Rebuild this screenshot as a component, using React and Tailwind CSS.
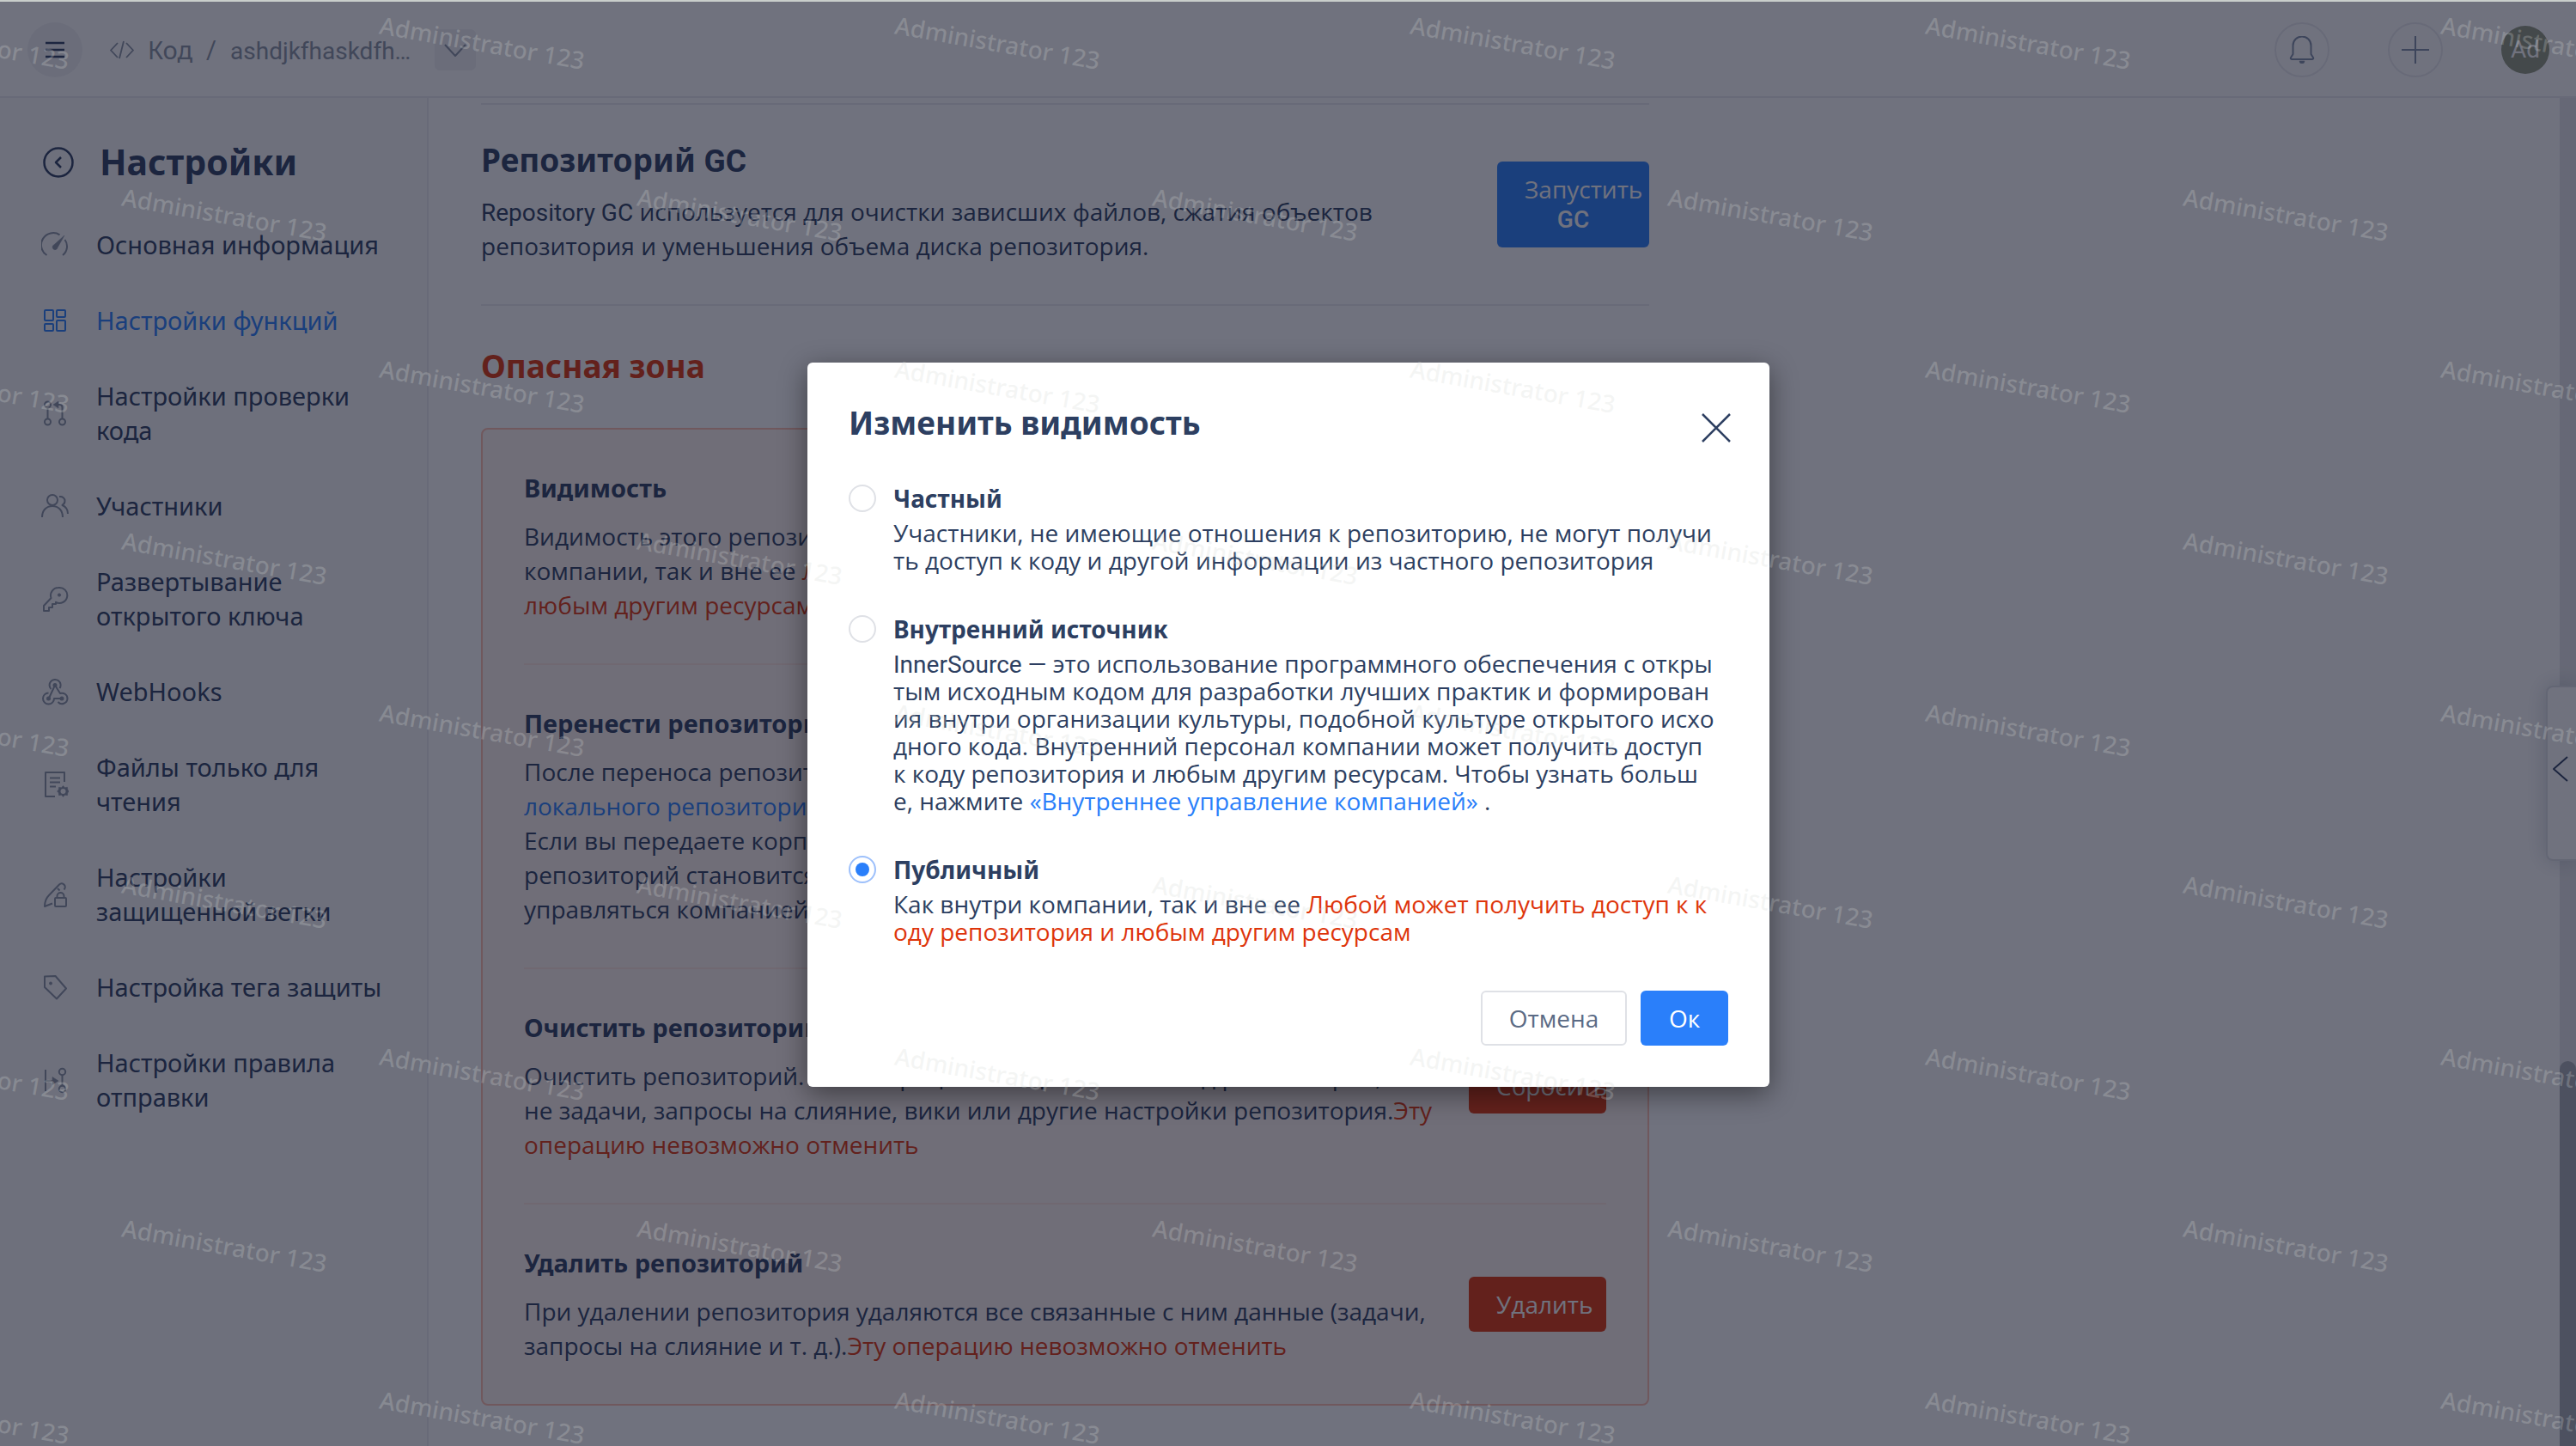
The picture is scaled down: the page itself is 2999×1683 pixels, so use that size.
const ink = "text-[#2d3f61]";
const noto = "font-['Noto_Sans','Open_Sans',sans-serif]";

function Icon({ children, size = "size-8", stroke = 2, box = "0 0 32 32" }) {
  return (
    <svg
      viewBox={box}
      className={`${size} shrink-0`}
      fill="none"
      stroke="currentColor"
      strokeWidth={stroke}
      strokeLinecap="butt"
      strokeLinejoin="round"
      aria-hidden="true"
    >
      {children}
    </svg>
  );
}

const icons = {
  gauge: (
    <Icon>
      <path d="M6.5 28A13 13 0 0 1 21.5 4.3M27.5 10A13 13 0 0 1 25 28" />
      <path d="M27 5 19 19.2a3 3 0 1 1-4-3.4Z" fill="currentColor" strokeWidth="0.5" />
    </Icon>
  ),
  grid: (
    <Icon>
      <rect x="4" y="4" width="10" height="12" rx="1" />
      <rect x="18" y="4" width="10" height="8" rx="1" />
      <rect x="4" y="20" width="10" height="8" rx="1" />
      <rect x="18" y="16" width="10" height="12" rx="1" />
    </Icon>
  ),
  review: (
    <Icon>
      <circle cx="7.5" cy="6" r="3.5" />
      <circle cx="7.5" cy="26" r="3.5" />
      <circle cx="24.5" cy="26" r="3.5" />
      <path d="M7.5 10v12M24.5 22V9a3 3 0 0 0-3-3H18" />
      <path d="M20 2v8l-6-4Z" fill="currentColor" strokeWidth="0.5" />
    </Icon>
  ),
  members: (
    <Icon>
      <circle cx="13" cy="9" r="6" />
      <path d="M1 29c0-8 5-13 12-13s12 5 12 13" />
      <path d="M21 5c4-.5 6.5 2 6.5 5 0 2-1 4-3 5 3.5 1.5 6.5 5 6.5 10" />
    </Icon>
  ),
  key: (
    <Icon>
      <path d="M20 3a9 9 0 0 0-8.5 12L3 24v6h6v-4h4v-4h4v-2.2A9 9 0 1 0 20 3Z" />
      <circle cx="21" cy="11.5" r="1.6" fill="currentColor" strokeWidth="1" />
    </Icon>
  ),
  hooks: (
    <Icon>
      <path d="M11.5 13a6.5 6.5 0 1 1 10-1M16 8.5 22 18c4-1 8.5 1 8.5 6a6.3 6.3 0 0 1-11 4" />
      <path d="m16 8.5-7 15M8.5 17.5a6.5 6.5 0 1 0 6.5 6.5h9" />
      <circle cx="16" cy="8.5" r="1.5" fill="currentColor" />
      <circle cx="8.5" cy="24" r="1.5" fill="currentColor" />
      <circle cx="24" cy="24" r="1.5" fill="currentColor" />
    </Icon>
  ),
  files: (
    <Icon>
      <path d="M16 30H5V2h22v11M10 8.5h12M10 13.5h12M10 18.5h7" />
      <path
        d="m25.5 17.5 2 2.2 3-.4.3 3 1.7 1.7-1.7 1.7-.3 3-3-.4-2 2.2-2-2.2-3 .4-.3-3-1.7-1.7 1.7-1.7.3-3 3 .4Z"
        fill="currentColor"
        strokeWidth="0.5"
      />
      <circle cx="25.5" cy="24" r="3" className="fill-[#fafafb]" stroke="none" />
    </Icon>
  ),
  branch: (
    <Icon>
      <path d="M13 26.5 4 30c0-7 2-10 5-13L21 4.5c2-2 4-1.5 5.5 0s2 4 0 6M19 9l2.5 2.5" />
      <rect x="16" y="20" width="13" height="10" rx="1" />
      <path d="M18.5 20v-2a4 4 0 0 1 8 0v2" />
    </Icon>
  ),
  tag: (
    <Icon>
      <path d="M4 3.5 16.5 3 29 17.5 18 29.5 4 16Z" />
      <circle cx="11" cy="11.5" r="1.5" fill="currentColor" strokeWidth="1" />
    </Icon>
  ),
  push: (
    <Icon>
      <path d="M5 4v25M5 17h8M24.5 10.5v12" />
      <path d="M13 12.5v9l7-4.5Z" fill="currentColor" strokeWidth="0.5" />
      <circle cx="24.5" cy="6.5" r="3.7" />
      <circle cx="24.5" cy="26.5" r="3.7" />
    </Icon>
  ),
};

const nav = [
  { icon: "gauge", lines: ["Основная информация"] },
  { icon: "grid", lines: ["Настройки функций"], active: true },
  { icon: "review", lines: ["Настройки проверки", "кода"] },
  { icon: "members", lines: ["Участники"] },
  { icon: "key", lines: ["Развертывание", "открытого ключа"] },
  { icon: "hooks", lines: ["WebHooks"] },
  { icon: "files", lines: ["Файлы только для", "чтения"] },
  { icon: "branch", lines: ["Настройки", "защищенной ветки"] },
  { icon: "tag", lines: ["Настройка тега защиты"] },
  { icon: "push", lines: ["Настройки правила", "отправки"] },
];

function Line({ children }) {
  return <span className="block whitespace-nowrap">{children}</span>;
}

function Red({ children }) {
  return <span className="text-[#de350b]">{children}</span>;
}

function Latin({ children }) {
  return <span className="font-[Roboto,sans-serif] leading-none">{children}</span>;
}

function Header() {
  return (
    <header className="flex h-28 shrink-0 items-center border-b-2 border-[#ebecf0] bg-white pt-0.5 pr-[31px] pl-8 text-[#8993a4]">
      <button aria-label="Меню" className={`flex size-16 items-center justify-center rounded-full bg-[#f2f3f6] ${ink}`}>
        <Icon size="size-6" stroke={2.4} box="0 0 24 24">
          <path d="M1 4h22M1 12h22M1 20h22" />
        </Icon>
      </button>
      <nav className="ml-7 flex items-center text-[29px] leading-10" aria-label="Путь">
        <a href="#code" className="flex items-center gap-4">
          <Icon size="size-8" stroke={1.8}>
            <path d="M13 8 5 16.5l8 8.5M23 8l8 8.5-8 8.5M20 6l-5 20" />
          </Icon>
          <span className={noto}>Код</span>
        </a>
        <span className="mx-4 font-[Roboto,sans-serif]">/</span>
        <a href="#repo" className="text-[28px]">
          <Latin>ashdjkfhaskdfh…</Latin>
        </a>
        <button aria-label="Выбрать репозиторий" className="ml-7 flex size-12 items-center justify-center rounded-md bg-[#f2f3f6]">
          <Icon stroke={2}>
            <path d="m4 10 12 13 12-13" />
          </Icon>
        </button>
      </nav>
      <div className="ml-auto flex items-center gap-[68px]">
        <button aria-label="Уведомления" className="flex size-16 items-center justify-center rounded-full border-2 border-[#ebecf0] text-[#8190a8]">
          <Icon stroke={2}>
            <path d="M5.5 21v-10a10.5 10.5 0 0 1 21 0v10l2.5 4c.5 1-.2 2-1.3 2H4.3c-1.1 0-1.8-1-1.3-2Z" />
            <path d="M13 29h6a3 3 0 0 1-6 0Z" fill="currentColor" strokeWidth="0.5" />
          </Icon>
        </button>
        <button aria-label="Создать" className="flex size-16 items-center justify-center rounded-full border-2 border-[#ebecf0] text-[#8190a8]">
          <Icon stroke={2}>
            <path d="M16 0v32M0 16h32" />
          </Icon>
        </button>
        <button aria-label="Профиль" className="flex size-14 items-center justify-center rounded-full bg-[#919880] font-[Roboto,sans-serif] text-[28px] text-white">
          Ad
        </button>
      </div>
    </header>
  );
}

function Sidebar() {
  return (
    <aside className={`w-[499px] shrink-0 border-r-2 border-[#ebecf0] bg-[#fafafb] pt-[46px] pl-12 ${noto} ${ink}`}>
      <div className="flex h-14 items-center gap-7">
        <button aria-label="Назад">
          <Icon size="size-10" stroke={2.5} box="0 0 40 40">
            <circle cx="20" cy="21" r="16.5" />
            <path d="m23 15-6 6 6 6" />
          </Icon>
        </button>
        <h1 className="text-[41px] leading-[56px] font-bold">Настройки</h1>
      </div>
      <ul className="mt-[49px] flex flex-col gap-12 text-[29px] leading-10">
        {nav.map((item) => (
          <li key={item.icon}>
            <a href={`#${item.icon}`} className={`flex items-center gap-8 ${item.active ? "text-[#2a7ffa]" : ""}`}>
              <span className={item.active ? "" : "text-[#8993a4]"}>{icons[item.icon]}</span>
              <span>
                {item.lines.map((line) => (
                  <Line key={line}>{line}</Line>
                ))}
              </span>
            </a>
          </li>
        ))}
      </ul>
    </aside>
  );
}

function DangerItem({ title, button, children }) {
  return (
    <section className="flex items-center justify-between border-b-2 border-[#ffe6df] py-12 last:border-b-0">
      <div>
        <h3 className={`text-[29px] leading-10 font-bold ${noto}`}>{title}</h3>
        <p className="mt-4">{children}</p>
      </div>
      <button className="flex h-16 w-40 shrink-0 items-center rounded-md bg-[#de350b] pl-8 whitespace-nowrap text-white">{button}</button>
    </section>
  );
}

function Content() {
  return (
    <main className={`w-[1360px] text-[28px] leading-10 ${ink}`}>
      <section className="mt-[6px] flex items-center justify-between border-y-2 border-[#ebecf0] pt-10 pb-12">
        <div>
          <h2 className={`text-[37px] leading-[48px] font-bold ${noto}`}>
            Репозиторий <Latin>GC</Latin>
          </h2>
          <p className="mt-4">
            <Line>
              <Latin>Repository GC</Latin> используется для очистки зависших файлов, сжатия объектов
            </Line>
            <Line>репозитория и уменьшения объема диска репозитория.</Line>
          </p>
        </div>
        <button className="mt-2 h-[100px] w-[177px] rounded-md bg-[#2a7ffa] px-8 leading-9 text-white">
          <span className="block text-left whitespace-nowrap">Запустить</span>
          <span className="block font-[Roboto,sans-serif] font-medium">GC</span>
        </button>
      </section>
      <h2 className={`mt-[46px] text-[37px] leading-[48px] font-bold text-[#de350b] ${noto}`}>Опасная зона</h2>
      <div className="mt-12 rounded-lg border-2 border-[#ffbdad] bg-[#fff5f1] px-12">
        <DangerItem title="Видимость" button="Изменить">
          <Line>Видимость этого репозитория публичная. Как внутри</Line>
          <Line>
            компании, так и вне ее <Red>Любой может получить доступ</Red>
          </Line>
          <Line>
            <Red>любым другим ресурсам</Red>
          </Line>
        </DangerItem>
        <DangerItem title="Перенести репозиторий" button="Перенести">
          <Line>После переноса репозитория измените адрес</Line>
          <Line>
            <a href="#remote" className="text-[#2a7ffa]">
              локального репозитория
            </a>
          </Line>
          <Line>Если вы передаете корпоративный репозиторий,</Line>
          <Line>репозиторий становится личным и не будет</Line>
          <Line>управляться компанией</Line>
        </DangerItem>
        <DangerItem title="Очистить репозиторий" button="Сбросить">
          <Line>Очистить репозиторий. Эта операция очищает только код репозитория,</Line>
          <Line>
            не задачи, запросы на слияние, вики или другие настройки репозитория.<Red>Эту</Red>
          </Line>
          <Line>
            <Red>операцию невозможно отменить</Red>
          </Line>
        </DangerItem>
        <DangerItem title="Удалить репозиторий" button="Удалить">
          <Line>При удалении репозитория удаляются все связанные с ним данные (задачи,</Line>
          <Line>
            запросы на слияние и т. д.).<Red>Эту операцию невозможно отменить</Red>
          </Line>
        </DangerItem>
      </div>
    </main>
  );
}

function Option({ id, title, checked, children }) {
  return (
    <div className="flex items-start gap-5">
      <input
        type="radio"
        name="visibility"
        id={id}
        defaultChecked={checked}
        className="mt-1 size-8 shrink-0 appearance-none rounded-full border-2 border-[#dfe1e6] bg-white bg-clip-content p-[6px] checked:border-[#9dc0fb] checked:bg-[#2a7ffa]"
      />
      <div>
        <label htmlFor={id} className={`block leading-10 font-bold ${noto}`}>
          {title}
        </label>
        <p className="mt-1">{children}</p>
      </div>
    </div>
  );
}

function Dialog() {
  return (
    <div
      role="dialog"
      aria-labelledby="dialog-title"
      className={`w-[1120px] rounded-md bg-white p-12 text-[28px] leading-8 shadow-[0_8px_32px_rgba(0,0,0,0.45)] ${ink}`}
    >
      <div className="flex items-start justify-between">
        <h2 id="dialog-title" className={`text-[37px] leading-[44px] font-bold ${noto}`}>
          Изменить видимость
        </h2>
        <button aria-label="Закрыть" className="-mr-1 pt-2.5">
          <Icon size="size-9" stroke={2.5} box="0 0 36 36">
            <path d="m2 2 32 32M34 2 2 34" />
          </Icon>
        </button>
      </div>
      <div className="mt-11 flex flex-col gap-11">
        <Option id="private" title="Частный">
          <Line>Участники, не имеющие отношения к репозиторию, не могут получи</Line>
          <Line>ть доступ к коду и другой информации из частного репозитория</Line>
        </Option>
        <Option id="internal" title="Внутренний источник">
          <Line>
            <Latin>InnerSource —</Latin> это использование программного обеспечения с откры
          </Line>
          <Line>тым исходным кодом для разработки лучших практик и формирован</Line>
          <Line>ия внутри организации культуры, подобной культуре открытого исхо</Line>
          <Line>дного кода. Внутренний персонал компании может получить доступ</Line>
          <Line>к коду репозитория и любым другим ресурсам. Чтобы узнать больш</Line>
          <Line>
            е, нажмите{" "}
            <a href="#internal-management" className="text-[#2a7ffa]">
              «Внутреннее управление компанией»
            </a>{" "}
            .
          </Line>
        </Option>
        <Option id="public" title="Публичный" checked>
          <Line>
            Как внутри компании, так и вне ее <Red>Любой может получить доступ к к</Red>
          </Line>
          <Line>
            <Red>оду репозитория и любым другим ресурсам</Red>
          </Line>
        </Option>
      </div>
      <div className="mt-[53px] flex justify-end gap-4">
        <button className="h-16 w-[170px] rounded-md border-2 border-[#dfe1e6] bg-white text-[#5b6b85]">Отмена</button>
        <button className="h-16 w-[102px] rounded-md bg-[#2a7ffa] text-white">Ок</button>
      </div>
    </div>
  );
}

function Watermark() {
  return (
    <div aria-hidden="true" className={`pointer-events-none absolute inset-0 z-20 overflow-hidden text-[28px] leading-10 font-medium text-[#d4d8d4]/25 ${noto}`}>
      {Array.from({ length: 9 }, (_, row) => (
        <div key={row} className={`flex h-[200px] ${row % 2 ? "ml-[139px]" : "-ml-[161px]"}`}>
          {Array.from({ length: 6 }, (_, col) => (
            <div key={col} className="w-[600px] shrink-0 pt-2">
              <span className="inline-block origin-bottom-left rotate-[10deg]">Administrator 123</span>
            </div>
          ))}
        </div>
      ))}
    </div>
  );
}

export default function App() {
  return (
    <div className="relative flex h-screen flex-col overflow-hidden bg-white font-['Open_Sans','Noto_Sans',sans-serif]">
      <div className="h-[2px] shrink-0 bg-[#c9cecb]" />
      <div className="relative flex min-h-0 grow flex-col">
        <Header />
        <div className="flex min-h-0 grow">
          <Sidebar />
          <div className="min-w-0 grow overflow-hidden pl-[61px]">
            <Content />
          </div>
          <div className="flex w-[19px] shrink-0 flex-col justify-end bg-[#e6e7ea]">
            <div className="h-[448px] rounded-t-full bg-[#a9adb5]" />
          </div>
        </div>
        <button
          aria-label="Открыть панель"
          className={`absolute top-[796px] right-0 flex h-[204px] w-[35px] items-center justify-center rounded-l-lg border-2 border-r-0 border-[#dfe1e6] bg-white pb-3 shadow-[0_0_24px_rgba(9,30,66,0.2)] ${ink}`}
        >
          <Icon stroke={2}>
            <path d="M22 3 6 17l16 14" />
          </Icon>
        </button>
        <div className="absolute inset-0 z-10 flex items-center justify-center bg-[#111428]/60 pt-0.5 pl-px">
          <Dialog />
        </div>
      </div>
      <Watermark />
    </div>
  );
}
